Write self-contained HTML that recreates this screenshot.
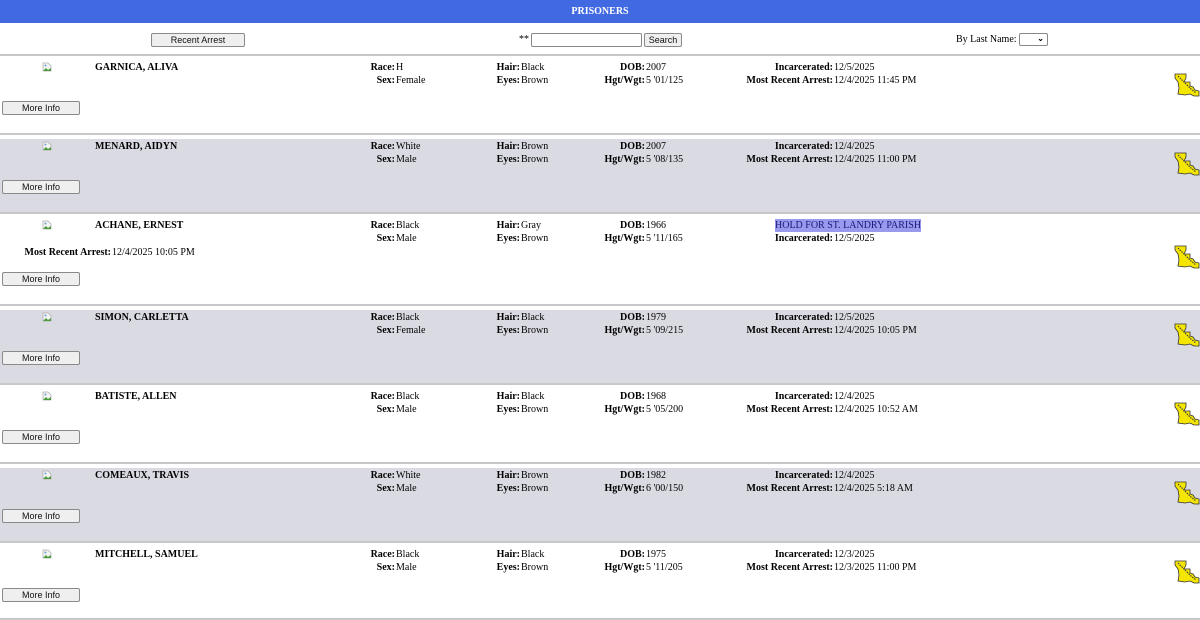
<!DOCTYPE html>
<html><head><meta charset="utf-8"><style>
*{margin:0;padding:0;box-sizing:border-box}
body{width:1200px;height:620px;overflow:hidden;background:#fff;font-family:"Liberation Serif",serif;font-size:10px;color:#000;position:relative}
.hdr{position:absolute;left:0;top:0;width:1200px;height:23px;background:#4169e1;color:#fff;text-align:center;line-height:23px;font-weight:bold;font-size:10px}
.btn{position:absolute;height:14px;border:1px solid #8a8a8a;background:#efefef;border-radius:2px;font-family:"Liberation Sans",sans-serif;font-size:9px;text-align:center;line-height:13px;color:#111}
.line{position:absolute;left:0;width:1200px;height:2px;background:#c8c8c8}
.grey{position:absolute;left:0;width:1200px;background:#dadae2}
.t{position:absolute;white-space:nowrap;line-height:13px}
.l{position:absolute;white-space:nowrap;text-align:right;font-weight:bold;line-height:13px}
.img{position:absolute;width:10px;height:10px}
.la{position:absolute;left:1174px;width:26px;height:24px}
</style></head><body>
<div class="hdr">PRISONERS</div>
<div class="btn" style="left:151px;top:33px;width:94px">Recent Arrest</div>
<div class="t" style="left:519px;top:33px">**</div>
<div style="position:absolute;left:531px;top:33px;width:111px;height:14px;border:1px solid #888;border-radius:2px;background:#fff"></div>
<div class="btn" style="left:644px;top:33px;width:38px">Search</div>
<div class="t" style="left:956px;top:33px">By Last Name:</div>
<div style="position:absolute;left:1019px;top:33px;width:29px;height:13px;border:1px solid #888;border-radius:2px;background:#fff;font-size:8px;text-align:right;padding-right:3px;line-height:9px;font-weight:bold">&#8964;</div>
<div id="rows"></div>
<script>
var data=[
["GARNICA, ALIVA","H","Female","Black","Brown","2007","5 '01/125","12/5/2025","12/4/2025 11:45 PM"],
["MENARD, AIDYN","White","Male","Brown","Brown","2007","5 '08/135","12/4/2025","12/4/2025 11:00 PM"],
["ACHANE, ERNEST","Black","Male","Gray","Brown","1966","5 '11/165","12/5/2025","12/4/2025 10:05 PM"],
["SIMON, CARLETTA","Black","Female","Black","Brown","1979","5 '09/215","12/5/2025","12/4/2025 10:05 PM"],
["BATISTE, ALLEN","Black","Male","Black","Brown","1968","5 '05/200","12/4/2025","12/4/2025 10:52 AM"],
["COMEAUX, TRAVIS","White","Male","Brown","Brown","1982","6 '00/150","12/4/2025","12/4/2025 5:18 AM"],
["MITCHELL, SAMUEL","Black","Male","Black","Brown","1975","5 '11/205","12/3/2025","12/3/2025 11:00 PM"]];
var tops=[54,133,212,304,383,462,541,619];
var la='<svg class="la" style="top:TOPpx" viewBox="0 0 26 24"><path d="M1 1 L12 1 L12 5 L10 9 L16 9 L16 13 L19 14 L21 17 L25 18 L25 23 L20 23 L16 21 L11 22 L4 21 L5 15 L4 9 L1 5 Z" fill="#f5e600" stroke="#333" stroke-width=".8"/><path d="M4 3 L9 8 L13 12 L17 16 L22 20" stroke="#444" stroke-width="1.2" stroke-dasharray="1.5 1" fill="none"/></svg>';
var img='<svg class="img" style="left:42px;top:TOPpx" viewBox="0 0 10 10"><path d="M1 1 H6 L9 4 V9 H1 Z" fill="#f4f4f4" stroke="#aaa" stroke-width=".7"/><path d="M1 9 L4 6 L6 8 L9 6 V9 Z" fill="#4a9a3a"/><circle cx="3.5" cy="3.5" r="1" fill="#6aa0d0"/></svg>';
var h='';
for(var i=0;i<7;i++){
 var T=tops[i],d=data[i],n=tops[i+1];
 if(i%2==1)h+='<div class="grey" style="top:'+(T+6)+'px;height:'+(n-T-6)+'px"></div>';
 h+='<div class="line" style="top:'+T+'px"></div>';
 var y1=T+7,y2=T+20;
 h+=img.replace('TOP',T+8);
 h+='<div class="t" style="left:95px;top:'+y1+'px;font-weight:bold">'+d[0]+'</div>';
 h+='<div class="l" style="right:805px;top:'+y1+'px">Race:</div><div class="t" style="left:396px;top:'+y1+'px">'+d[1]+'</div>';
 h+='<div class="l" style="right:805px;top:'+y2+'px">Sex:</div><div class="t" style="left:396px;top:'+y2+'px">'+d[2]+'</div>';
 h+='<div class="l" style="right:680px;top:'+y1+'px">Hair:</div><div class="t" style="left:521px;top:'+y1+'px">'+d[3]+'</div>';
 h+='<div class="l" style="right:680px;top:'+y2+'px">Eyes:</div><div class="t" style="left:521px;top:'+y2+'px">'+d[4]+'</div>';
 h+='<div class="l" style="right:555px;top:'+y1+'px">DOB:</div><div class="t" style="left:646px;top:'+y1+'px">'+d[5]+'</div>';
 h+='<div class="l" style="right:555px;top:'+y2+'px">Hgt/Wgt:</div><div class="t" style="left:646px;top:'+y2+'px">'+d[6]+'</div>';
 if(i==2){
  h+='<div class="t" style="left:775px;top:'+y1+'px;background:#9999ee;color:#1a1a7a">HOLD FOR ST. LANDRY PARISH</div>';
  h+='<div class="l" style="right:367px;top:'+y2+'px">Incarcerated:</div><div class="t" style="left:834px;top:'+y2+'px">'+d[7]+'</div>';
  h+='<div class="l" style="right:1089px;top:'+(T+34)+'px">Most Recent Arrest:</div><div class="t" style="left:112px;top:'+(T+34)+'px">'+d[8]+'</div>';
  h+='<div class="btn" style="left:2px;top:'+(T+60)+'px;width:78px">More Info</div>';
  h+=la.replace('TOP',T+33);
 }else{
  h+='<div class="l" style="right:367px;top:'+y1+'px">Incarcerated:</div><div class="t" style="left:834px;top:'+y1+'px">'+d[7]+'</div>';
  h+='<div class="l" style="right:367px;top:'+y2+'px">Most Recent Arrest:</div><div class="t" style="left:834px;top:'+y2+'px">'+d[8]+'</div>';
  h+='<div class="btn" style="left:2px;top:'+(T+47)+'px;width:78px">More Info</div>';
  h+=la.replace('TOP',T+19);
 }
}
h+='<div class="line" style="top:618px"></div>';
document.getElementById('rows').innerHTML=h;
</script>
</body></html>
